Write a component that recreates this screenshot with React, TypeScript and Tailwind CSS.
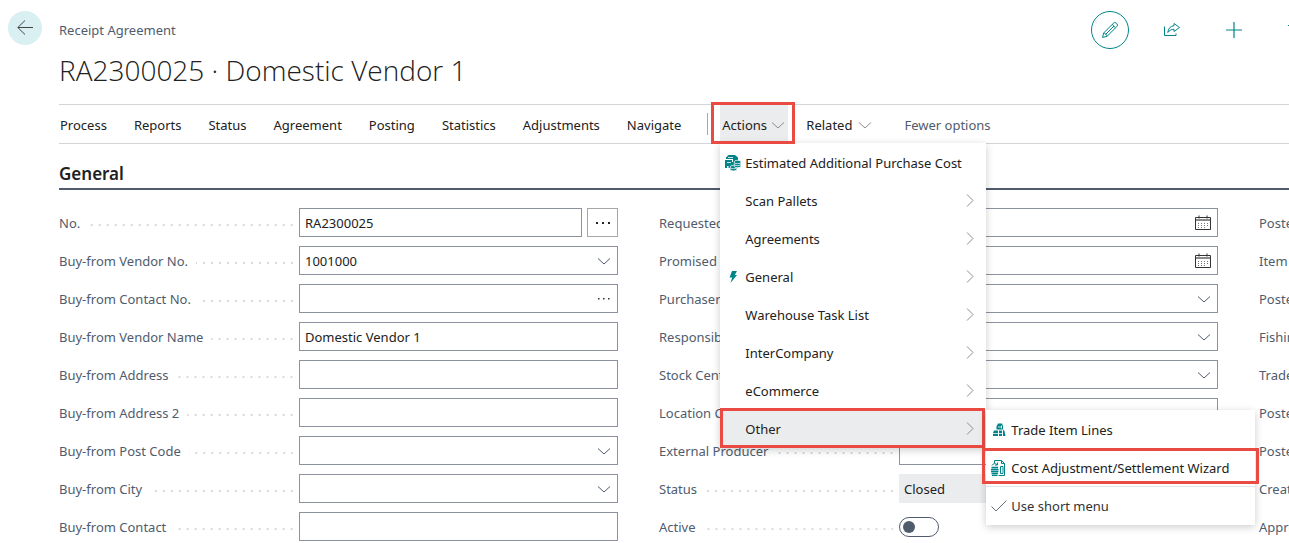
import React from 'react';

type FieldKind = 'text' | 'select' | 'assist' | 'lookup' | 'date' | 'readonly' | 'toggle';

interface Field {
  label: string;
  kind: FieldKind;
  value?: string;
}

const NAV_ITEMS = ['Process', 'Reports', 'Status', 'Agreement', 'Posting', 'Statistics', 'Adjustments', 'Navigate'];

const COLUMNS: Field[][] = [
  [
    { label: 'No.', kind: 'assist', value: 'RA2300025' },
    { label: 'Buy-from Vendor No.', kind: 'select', value: '1001000' },
    { label: 'Buy-from Contact No.', kind: 'lookup' },
    { label: 'Buy-from Vendor Name', kind: 'text', value: 'Domestic Vendor 1' },
    { label: 'Buy-from Address', kind: 'text' },
    { label: 'Buy-from Address 2', kind: 'text' },
    { label: 'Buy-from Post Code', kind: 'select' },
    { label: 'Buy-from City', kind: 'select' },
    { label: 'Buy-from Contact', kind: 'text' },
  ],
  [
    { label: 'Requested Receipt Date', kind: 'date' },
    { label: 'Promised Receipt Date', kind: 'date' },
    { label: 'Purchaser Code', kind: 'select' },
    { label: 'Responsibility Center', kind: 'select' },
    { label: 'Stock Center', kind: 'select' },
    { label: 'Location Code', kind: 'select' },
    { label: 'External Producer', kind: 'text' },
    { label: 'Status', kind: 'readonly', value: 'Closed' },
    { label: 'Active', kind: 'toggle' },
  ],
  [
    { label: 'Posted Receipts', kind: 'text' },
    { label: 'Item Lines', kind: 'text' },
    { label: 'Posted Invoices', kind: 'text' },
    { label: 'Fishing Trip', kind: 'text' },
    { label: 'Trade Agreement', kind: 'text' },
    { label: 'Posted Costs', kind: 'text' },
    { label: 'Posted Credits', kind: 'text' },
    { label: 'Created By', kind: 'text' },
    { label: 'Approved By', kind: 'text' },
  ],
];

const ChevronDown: React.FC<{ className?: string }> = ({ className }) => (
  <svg viewBox="0 0 14 14" fill="none" stroke="currentColor" className={`h-3.5 w-3.5 ${className ?? ''}`}>
    <path d="M1 4.5l6 5.5 6-5.5" />
  </svg>
);

const ChevronRight = () => (
  <svg viewBox="0 0 14 14" fill="none" stroke="currentColor" className="h-3.5 w-3.5 text-[#8d8d8d]">
    <path d="M4 .5l6 6-6 6" />
  </svg>
);

const Dots = () => (
  <svg viewBox="0 0 16 4" fill="currentColor" className="h-1 w-4">
    <path d="M1 1h2v2H1zM7 1h2v2H7zM13 1h2v2h-2z" />
  </svg>
);

const SmallDots = () => (
  <svg viewBox="0 0 14 4" fill="currentColor" className="h-1 w-3.5">
    <path d="M1 1h1.500v1.500H1zM6 1h1.500v1.500H6zM11 1h1.500v1.500H11z" />
  </svg>
);

const CalendarIcon = () => (
  <svg viewBox="0 0 16 16" fill="none" className="h-4 w-4">
    <path d="M.5 2.5h15v12H.5z" stroke="#333" />
    <path d="M1 5h14" stroke="#8a8a8a" strokeWidth="2" />
    <path d="M4 .5v3M12 .5v3" stroke="#333" />
    <path d="M3 8.5h10M3 10.5h10M3 12.5h7" stroke="#777" strokeDasharray="1 2" />
  </svg>
);

const BackIcon = () => (
  <svg viewBox="0 0 16 16" fill="none" stroke="#444" className="h-4 w-4">
    <path d="M16 7.500H.8M8 .5L.8 7.500 8 14.500" />
  </svg>
);

const PencilIcon = () => (
  <svg viewBox="0 0 16 16" fill="none" stroke="currentColor" className="h-4 w-4">
    <path d="M.6 15.4l1-4.4L11.500 1.200a1.900 1.900 0 0 1 2.800 0l.5.5a1.900 1.900 0 0 1 0 2.800L5 14.400zM1.600 11c1.600.2 3.200 1.800 3.400 3.400M10.200 2.500l3.300 3.300M3.500 12.500l8.500-8.500" />
  </svg>
);

const ShareIcon = () => (
  <svg viewBox="0 0 16 16" fill="none" stroke="currentColor" className="h-4 w-4">
    <path d="M.5 4.500v9H12V11.500" />
    <path d="M10 1.500l5.500 4-5.500 4V7.300C7.500 7.300 5.500 8.300 3.800 10.500 4.200 6.500 6.500 4 10 3.700z" />
  </svg>
);

const PlusIcon = () => (
  <svg viewBox="0 0 16 16" fill="none" stroke="currentColor" strokeWidth="1.2" className="h-4 w-4">
    <path d="M8 0v16M0 8h16" />
  </svg>
);

const TrashIcon = () => (
  <svg viewBox="0 0 16 16" fill="none" stroke="currentColor" className="h-4 w-4">
    <path d="M0 3.500h16M5.500 3V1h5v2M2.500 4l1 11.500h9l1-11.500" />
  </svg>
);

const CostIcon = () => (
  <svg viewBox="0 0 16 16" className="h-4 w-4">
    <path d="M3.500 0H10l3 2.500v1.500H1V2.500z" fill="#008489" />
    <path d="M0 5h7v2h3v4H5v2H3.500v-2H2v2H0z" fill="#008489" />
    <path d="M8 3h5v4H8z" fill="#008489" />
    <path d="M3 2.500h5M2 7.500h4" stroke="#fff" strokeWidth=".8" />
    <g fill="#008489" stroke="#fff" strokeWidth=".7">
      <ellipse cx="8.500" cy="14" rx="3.500" ry="1.900" />
      <ellipse cx="8.500" cy="12" rx="3.500" ry="1.700" />
      <ellipse cx="12.500" cy="11" rx="3.500" ry="1.700" />
      <ellipse cx="12.500" cy="9" rx="3.500" ry="1.700" />
      <ellipse cx="12.500" cy="7" rx="3.500" ry="1.700" />
    </g>
  </svg>
);

const BoltIcon = () => (
  <svg viewBox="0 0 16 16" className="h-4 w-4">
    <path d="M7 2h5l-2.200 4H12L5.500 14l1.700-5.500H4.500z" fill="#008489" />
  </svg>
);

const TradeIcon = () => (
  <svg viewBox="0 0 16 16" className="h-4 w-4">
    <path d="M7 1.500h4l1 2.500v3.500H5.500V4.500z" fill="#008489" />
    <path d="M3 8.500h4V11H2zM2 11.800h5V14H2zM8 8.500h3V11H8zM8 11.800h3V14H8z" fill="#008489" />
    <path d="M12 7.500l1.500 1.500L14.500 14H12z" fill="#008489" />
    <path d="M7 5h3.500M10.500 3.500v3" stroke="#fff" strokeWidth=".8" />
  </svg>
);

const WizardIcon = () => (
  <svg viewBox="0 0 16 16" fill="none" stroke="#008489" className="h-4 w-4">
    <path d="M3.500 3V.5h7l3 3v12h-6M10.500.5v3h3" />
    <path d="M9.500 6.500h2.500v7H9.500z" />
    <path d="M1 5.500c1-2 3-2.500 5-1M6.500 2.500v2.500H4" />
    <path d="M.5 7.500h6.500M0 9.500h7.500M0 11.500h7.500M.5 13.500h6.500M1 15.500h5.500" strokeWidth="1.400" />
  </svg>
);

const CheckIcon = () => (
  <svg viewBox="0 0 16 16" fill="none" stroke="#666f7c" className="h-4 w-4">
    <path d="M.5 8.500L5 13 15.500 2.500" />
  </svg>
);

const MENU_ITEMS: { label: string; icon?: React.ReactNode; nested?: boolean }[] = [
  { label: 'Estimated Additional Purchase Cost', icon: <CostIcon /> },
  { label: 'Scan Pallets', nested: true },
  { label: 'Agreements', nested: true },
  { label: 'General', icon: <BoltIcon />, nested: true },
  { label: 'Warehouse Task List', nested: true },
  { label: 'InterCompany', nested: true },
  { label: 'eCommerce', nested: true },
];

const menuButton = 'flex h-[38px] w-full items-center gap-1 whitespace-nowrap pl-[5px] pr-[9px] text-left';
const box = 'h-[29px] w-full border border-[#8c939e] bg-white px-[5px] text-[#212121] outline-none';

const FieldControl: React.FC<{ id: string; field: Field }> = ({ id, field }) => {
  switch (field.kind) {
    case 'toggle':
      return (
        <input
          id={id}
          type="checkbox"
          role="switch"
          className="h-5 w-10 appearance-none rounded-full border border-[#505c6d] bg-white p-[3px] before:block before:h-3 before:w-3 before:rounded-full before:bg-[#505c6d] checked:before:ml-5"
        />
      );
    case 'readonly':
      return (
        <input id={id} readOnly defaultValue={field.value} className="h-[29px] w-full bg-[#ebecee] px-[5px] text-[#212121] outline-none" />
      );
    case 'assist':
      return (
        <div className="flex w-full gap-[5px]">
          <input id={id} defaultValue={field.value} className={box} />
          <button aria-label="Assist edit" className="flex h-[29px] w-[31px] shrink-0 items-center justify-center border border-[#a6a6a6] text-[#212121]">
            <Dots />
          </button>
        </div>
      );
    case 'select':
      return (
        <div className="relative w-full">
          <select id={id} defaultValue={field.value ?? ''} className={`${box} appearance-none`}>
            <option>{field.value ?? ''}</option>
          </select>
          <ChevronDown className="pointer-events-none absolute right-[7px] top-2 text-[#505c6d]" />
        </div>
      );
    case 'lookup':
    case 'date':
      return (
        <div className="relative w-full">
          <input id={id} className={`${box} block`} />
          <button aria-label={field.label} className="absolute right-[7px] top-0 flex h-[29px] items-center text-[#333]">
            {field.kind === 'date' ? <CalendarIcon /> : <SmallDots />}
          </button>
        </div>
      );
    default:
      return <input id={id} defaultValue={field.value} className={box} />;
  }
};

const ActionsMenu = () => (
  <div className="absolute left-0 top-full z-20 w-[266px] bg-white pt-px text-[#212121] shadow-[0_2px_8px_rgba(0,0,0,0.2)]">
    {MENU_ITEMS.map((item) => (
      <button key={item.label} className={menuButton}>
        <span className="w-4 shrink-0">{item.icon}</span>
        <span className="flex-1">{item.label}</span>
        {item.nested && <ChevronRight />}
      </button>
    ))}
    <div className="relative">
      <button className={`${menuButton} bg-[#ebecee]`}>
        <span className="w-4 shrink-0" />
        <span className="flex-1">Other</span>
        <ChevronRight />
      </button>
      <span className="pointer-events-none absolute -top-0.5 bottom-0 left-0 right-px border-3 border-[#e94b43]" />
      <div className="absolute left-full top-0 w-[269px] bg-white py-px shadow-[0_2px_8px_rgba(0,0,0,0.2)]">
        <button className={menuButton}>
          <TradeIcon />
          Trade Item Lines
        </button>
        <div className="relative">
          <button className={menuButton}>
            <WizardIcon />
            Cost Adjustment/Settlement Wizard
          </button>
          <span className="pointer-events-none absolute -left-1 -right-1 -top-px bottom-[3px] border-3 border-[#e94b43]" />
        </div>
        <button className={`${menuButton} -mt-px border-t border-[#e1e3e6]`}>
          <CheckIcon />
          <span className="text-[#333]">Use short menu</span>
        </button>
      </div>
    </div>
  </div>
);

const App: React.FC = () => {
  return (
    <div className="overflow-hidden bg-white font-['Noto_Sans','Open_Sans',sans-serif] text-[13px] leading-5 text-[#212121]">
      <header className="flex items-start pl-2 pt-[11px]">
        <button aria-label="Back" className="flex h-[34px] w-[34px] items-center justify-center rounded-full bg-[#d9f0f2]">
          <BackIcon />
        </button>
        <div className="ml-[17px] pt-[9px]">
          <p className="text-[#505c6d]">Receipt Agreement</p>
          <h1 className="pb-3.5 pt-2.5 font-['Open_Sans',sans-serif] text-[28px] font-light leading-10">
            RA2300025 · Domestic Vendor 1
          </h1>
        </div>
        <div className="-mr-[26px] ml-auto flex gap-6 text-[#008489]">
          <button aria-label="Edit" className="flex h-[38px] w-[38px] items-center justify-center rounded-full border border-[#008489]">
            <PencilIcon />
          </button>
          <button aria-label="Share" className="flex h-[38px] w-[38px] items-center justify-center">
            <ShareIcon />
          </button>
          <button aria-label="New" className="flex h-[38px] w-[38px] items-center justify-center">
            <PlusIcon />
          </button>
          <button aria-label="Delete" className="flex h-[38px] w-[38px] items-center justify-center">
            <TrashIcon />
          </button>
        </div>
      </header>

      <main className="pl-[59px]">
        <nav className="flex h-10 items-stretch whitespace-nowrap border-y border-[#d2d4d8]">
          <div className="flex gap-[27px] pl-px pr-[26px]">
            {NAV_ITEMS.map((item) => (
              <button key={item} className="pt-0.5">
                {item}
              </button>
            ))}
          </div>
          <span className="my-2 w-px bg-[#a3a9b2]" />
          <div className="relative ml-3 flex">
            <button className="flex w-[68px] items-center gap-1 bg-[#ebecee] pl-0.5 pt-0.5">
              Actions
              <ChevronDown className="shrink-0 text-[#8d8d8d]" />
            </button>
            <span className="pointer-events-none absolute -bottom-px -left-[9px] -right-[7px] -top-[3px] z-30 border-3 border-[#e94b43]" />
            <ActionsMenu />
          </div>
          <button className="ml-[18px] flex items-center gap-1.5 pt-0.5">
            Related
            <ChevronDown className="text-[#8d8d8d]" />
          </button>
          <button className="ml-8 pt-0.5 text-[#505c6d]">Fewer options</button>
        </nav>

        <section>
          <h2 className="border-b-2 border-[#505c6d] pb-0.5 pt-[18px] text-[17px] font-semibold leading-6">General</h2>
          <form className="grid grid-cols-[repeat(3,minmax(559px,1fr))] gap-x-[41px] pt-[18px]">
            {COLUMNS.map((fields, col) => (
              <div key={col} className="flex flex-col gap-[9px]">
                {fields.map((field, row) => {
                  const id = `field-${col}-${row}`;
                  return (
                    <div key={id} className="flex h-[29px] items-center">
                      <div className="flex w-60 shrink-0 items-center pr-1.5">
                        <label htmlFor={id} className="whitespace-nowrap text-[#505c6d]">
                          {field.label}
                        </label>
                        <span className="ml-2 mt-1 h-0.5 flex-1 bg-[linear-gradient(90deg,transparent_6px,#d8dadd_6px)] bg-[length:8px_2px] bg-right" />
                      </div>
                      <FieldControl id={id} field={field} />
                    </div>
                  );
                })}
              </div>
            ))}
          </form>
        </section>
      </main>
    </div>
  );
};

export default App;
